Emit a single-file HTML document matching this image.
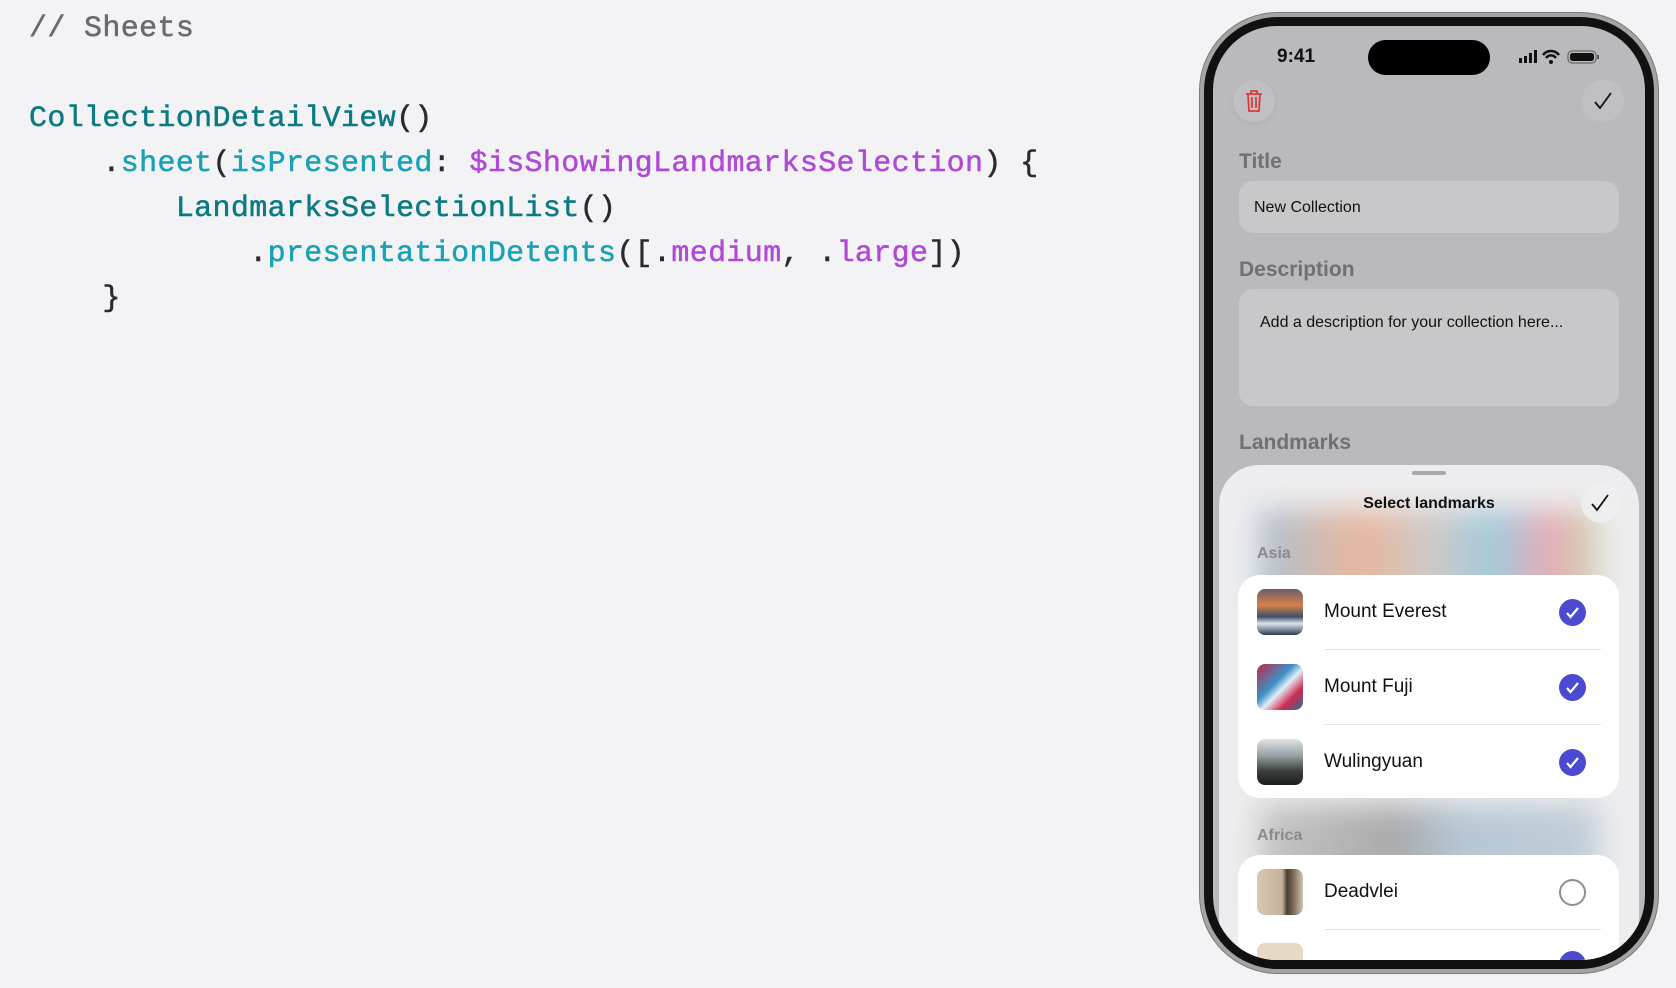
<!DOCTYPE html>
<html><head><meta charset="utf-8"><style>
*{margin:0;padding:0;box-sizing:border-box}
body{width:1676px;height:988px;background:#f3f3f5;position:relative;overflow:hidden;font-family:"Liberation Sans",sans-serif}
.code{position:absolute;left:29px;font-family:"Liberation Mono","DejaVu Sans Mono",monospace;font-size:30px;letter-spacing:0.35px;white-space:pre;color:#2a2a2e;line-height:36px;-webkit-text-stroke:0.5px currentColor}
.t{color:#0b7a83}.m{color:#18a2b5}.p{color:#b04ad6}.c{color:#6a6a70}
.phone{position:absolute;left:1200px;top:13px;width:458px;height:960px;border-radius:78px;background:#111;border:4px solid #a4a4a6;box-shadow:0 0 0 1px #7a7a7c}
.screen{position:absolute;left:1213px;top:26px;width:432px;height:934px;border-radius:64px;background:#b9b9be;overflow:hidden}
.a{position:absolute}
.lbl{font-weight:bold;font-size:21px;color:#6f6f74}
.fld{background:#c8c8ca;border-radius:14px}
.sheet{position:absolute;left:6px;top:439px;width:420px;height:520px;border-radius:40px;background:#ededef;overflow:hidden}
.card{position:absolute;left:19px;width:381px;background:#fff;border-radius:22px}
.row{position:absolute;left:0;width:381px;height:75px}
.th{position:absolute;left:19px;top:14px;width:46px;height:46px;border-radius:8px}
.nm{position:absolute;left:86px;top:26px;font-size:19px;color:#111}
.ck{position:absolute;left:321px;top:24px;width:27px;height:27px;border-radius:50%;background:#4b4ad0}
.ck svg{position:absolute;left:6px;top:6px}
.sep{position:absolute;left:86px;right:18px;height:1px;background:#e4e4e6}
</style></head><body>
<div class="code c" style="top:11px">// Sheets</div>
<div class="code" style="top:101px"><span class="t">CollectionDetailView</span>()</div>
<div class="code" style="top:146px">    .<span class="m">sheet</span>(<span class="m">isPresented</span>: <span class="p">$isShowingLandmarksSelection</span>) {</div>
<div class="code" style="top:191px">        <span class="t">LandmarksSelectionList</span>()</div>
<div class="code" style="top:236px">            .<span class="m">presentationDetents</span>([.<span class="p">medium</span>, .<span class="p">large</span>])</div>
<div class="code" style="top:281px">    }</div>

<div class="phone"></div>
<div class="screen">
 <div class="a" style="left:64px;top:20px;font-size:19px;font-weight:bold;color:#111">9:41</div>
 <div class="a" style="left:155px;top:14px;width:122px;height:35px;border-radius:18px;background:#000"></div>
 <svg class="a" style="left:305px;top:22px" width="90" height="18" viewBox="0 0 90 18">
  <rect x="1" y="10" width="3" height="5" fill="#111"/><rect x="6" y="8" width="3" height="7" fill="#111"/><rect x="11" y="5" width="3" height="10" fill="#111"/><rect x="16" y="2" width="3" height="13" fill="#111"/>
  <path d="M25 7 A10 10 0 0 1 41 7" stroke="#111" stroke-width="2.5" fill="none"/><path d="M28 10 A6 6 0 0 1 38 10" stroke="#111" stroke-width="2.5" fill="none"/><circle cx="33" cy="14" r="2" fill="#111"/>
  <rect x="50" y="3" width="28" height="12" rx="4" fill="none" stroke="#555" stroke-width="1"/><rect x="52" y="5" width="24" height="8" rx="2.5" fill="#111"/><rect x="79" y="7" width="2" height="4" fill="#555"/>
 </svg>
 <div class="a" style="left:20px;top:54px;width:42px;height:42px;border-radius:50%;background:#c0c0c4;box-shadow:0 2px 6px rgba(0,0,0,.06)"></div>
 <svg class="a" style="left:30px;top:63px" width="22" height="24" viewBox="0 0 22 24"><path d="M3 5h16M8 5V2h6v3M5 5l1 17h10l1-17M9 8v11M13 8v11" stroke="#e0393a" stroke-width="1.8" fill="none"/></svg>
 <div class="a" style="left:369px;top:54px;width:42px;height:42px;border-radius:50%;background:#c0c0c4"></div>
 <svg class="a" style="left:379px;top:64px" width="22" height="22" viewBox="0 0 22 22"><path d="M3 12l5 6L19 3" stroke="#111" stroke-width="1.8" fill="none"/></svg>
 <div class="a lbl" style="left:26px;top:124px">Title</div>
 <div class="a fld" style="left:26px;top:155px;width:380px;height:52px"></div>
 <div class="a" style="left:41px;top:173px;font-size:16px;color:#111">New Collection</div>
 <div class="a lbl" style="left:26px;top:232px">Description</div>
 <div class="a fld" style="left:26px;top:263px;width:380px;height:117px"></div>
 <div class="a" style="left:47px;top:288px;font-size:16px;color:#111">Add a description for your collection here...</div>
 <div class="a lbl" style="left:26px;top:405px">Landmarks</div>

 <div class="sheet">
  <div class="a" style="left:40px;top:45px;width:340px;height:110px;filter:blur(14px);background:linear-gradient(90deg,#9fb7c9 0%,#e8a98a 30%,#c9c0bd 50%,#8fc3d8 70%,#e89aa8 85%,#c8d0a8 100%);opacity:.8"></div>
  <div class="a" style="left:40px;top:340px;width:340px;height:100px;filter:blur(14px);background:linear-gradient(90deg,#bdbdbd 0%,#9a9a9a 40%,#a9bfcf 60%,#b8c6d2 100%);opacity:.8"></div>
  <div class="a" style="left:193px;top:6px;width:34px;height:4px;border-radius:2px;background:#a9a9ad"></div>
  <div class="a" style="left:0;width:420px;top:30px;text-align:center;font-size:16px;font-weight:bold;color:#111">Select landmarks</div>
  <div class="a" style="left:362px;top:18px;width:40px;height:40px;border-radius:50%;background:rgba(240,240,242,.8)"></div>
  <svg class="a" style="left:370px;top:27px" width="22" height="22" viewBox="0 0 22 22"><path d="M3 12l5 6L19 3" stroke="#111" stroke-width="1.8" fill="none"/></svg>
  <div class="a" style="left:38px;top:80px;font-size:16px;font-weight:bold;color:#8a8a90">Asia</div>
  <div class="card" style="top:110px;height:223px">
   <div class="row" style="top:0"><div class="th" style="background:linear-gradient(180deg,#6b5a6e 0%,#d9824a 35%,#3e4e66 60%,#dfe4ea 75%,#2b3a52 100%)"></div><div class="nm">Mount Everest</div><div class="ck"><svg width="15" height="15" viewBox="0 0 15 15"><path d="M2 8l3.5 4L13 3" stroke="#fff" stroke-width="2.2" fill="none"/></svg></div></div>
   <div class="sep" style="top:74px"></div>
   <div class="row" style="top:75px"><div class="th" style="background:linear-gradient(135deg,#c2284a 0%,#3b8fc6 40%,#e0eef5 55%,#d02a4f 75%,#2b6fa0 100%)"></div><div class="nm">Mount Fuji</div><div class="ck"><svg width="15" height="15" viewBox="0 0 15 15"><path d="M2 8l3.5 4L13 3" stroke="#fff" stroke-width="2.2" fill="none"/></svg></div></div>
   <div class="sep" style="top:149px"></div>
   <div class="row" style="top:150px"><div class="th" style="background:linear-gradient(180deg,#dfe3e6 0%,#9aa3a6 35%,#3b403c 70%,#1c1f1c 100%)"></div><div class="nm">Wulingyuan</div><div class="ck"><svg width="15" height="15" viewBox="0 0 15 15"><path d="M2 8l3.5 4L13 3" stroke="#fff" stroke-width="2.2" fill="none"/></svg></div></div>
  </div>
  <div class="a" style="left:38px;top:362px;font-size:16px;font-weight:bold;color:#8a8a90">Africa</div>
  <div class="card" style="top:390px;height:160px;border-radius:22px 22px 0 0">
   <div class="row" style="top:0"><div class="th" style="background:linear-gradient(90deg,#d9c8b4 0%,#c4b09a 55%,#4a3f36 65%,#6b5b4c 75%,#d3c2ad 100%)"></div><div class="nm">Deadvlei</div><div class="ck" style="background:#fff;border:2px solid #8e8e93"></div></div>
   <div class="sep" style="top:74px"></div>
   <div class="th" style="top:88px;background:#e8d8c4"></div>
   <div class="ck" style="top:96px;left:321px;position:absolute"></div>
  </div>
 </div>
</div>
</body></html>
